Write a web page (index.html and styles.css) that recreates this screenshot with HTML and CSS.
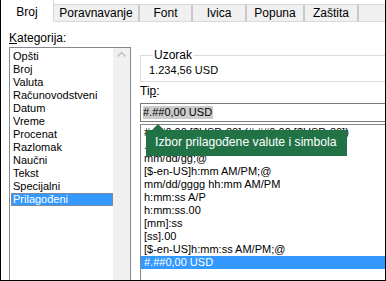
FILE: index.html
```html
<!DOCTYPE html>
<html lang="sr">
<head>
    <meta charset="UTF-8">
    <title>Oblikovanje ćelija</title>
    <link rel="stylesheet" href="styles.css">
</head>
<body>
    <div class="dialog">
        <div class="tabs">
            <div class="tab active">Broj</div>
            <div class="tab tab-wide">Poravnavanje</div>
            <div class="tab">Font</div>
            <div class="tab">Ivica</div>
            <div class="tab tab-mid">Popuna</div>
            <div class="tab">Zaštita</div>
            <div class="tab-fill"></div>
        </div>
        <div class="page">
            <div class="left">
                <div class="label"><u>K</u>ategorija:</div>
                <div class="listbox">
                    <div class="items">
                        <div class="item">Opšti</div>
                        <div class="item">Broj</div>
                        <div class="item">Valuta</div>
                        <div class="item">Računovodstveni</div>
                        <div class="item">Datum</div>
                        <div class="item">Vreme</div>
                        <div class="item">Procenat</div>
                        <div class="item">Razlomak</div>
                        <div class="item">Naučni</div>
                        <div class="item">Tekst</div>
                        <div class="item">Specijalni</div>
                        <div class="item selected">Prilagođeni</div>
                    </div>
                    <div class="scrollbar">
                        <svg width="17" height="14" viewBox="0 0 17 14">
                            <path d="M4.5 8.5 L8.5 4.5 L12.5 8.5" fill="none" stroke="#c2c2c2" stroke-width="1.5"/>
                        </svg>
                    </div>
                </div>
            </div>
            <div class="right">
                <fieldset class="sample">
                    <legend>Uzorak</legend>
                    <div class="sample-value">1.234,56 USD</div>
                </fieldset>
                <div class="label type-label">Ti<u>p</u>:</div>
                <div class="type-input"><span class="sel">#.##0,00 USD</span></div>
                <div class="type-list">
                    <div class="row">#.##0,00 [$USD-80];(#.##0,00 [$USD-80])</div>
                    <div class="row">.mm/dd/gggg h:mm</div>
                    <div class="row">mm/dd/gg;@</div>
                    <div class="row">[$-en-US]h:mm AM/PM;@</div>
                    <div class="row">mm/dd/gggg hh:mm AM/PM</div>
                    <div class="row">h:mm:ss A/P</div>
                    <div class="row">h:mm:ss.00</div>
                    <div class="row">[mm]:ss</div>
                    <div class="row">[ss].00</div>
                    <div class="row">[$-en-US]h:mm:ss AM/PM;@</div>
                    <div class="row selected">#.##0,00 USD</div>
                    <div class="tooltip">Izbor prilagođene valute i simbola</div>
                </div>
            </div>
        </div>
    </div>
</body>
</html>
```

FILE: styles.css
```css
body {
    margin: 0;
    background-color: #fff;
    font-family: "Liberation Sans", Arial, sans-serif;
    font-size: 11px;
    color: #000;
}
.dialog {
    width: 386px;
    height: 281px;
    box-sizing: border-box;
    border-left: 1px solid #000;
    border-right: 1px solid #000;
    border-bottom: 1px solid #000;
    overflow: hidden;
    background-color: #fff;
}
.tabs {
    display: flex;
    align-items: flex-end;
    height: 22px;
}
.tab {
    height: 18px;
    line-height: 17px;
    box-sizing: border-box;
    width: 54px;
    text-align: center;
    background-color: #f0f0f0;
    border-top: 1px solid #d9d9d9;
    border-right: 2px solid #c9c9c9;
    border-bottom: 1px solid #d9d9d9;
    font-size: 12px;
}
.tab:nth-child(3) {
    width: 53px;
}
.tab.active {
    width: 53px;
    height: 22px;
    line-height: 24px;
    background-color: #fff;
    border: none;
    border-right: 1px solid #d9d9d9;
}
.tab-wide {
    width: 86px;
}
.tab.tab-mid {
    width: 58px;
}
.tab-fill {
    flex: 1;
    height: 18px;
    box-sizing: border-box;
    background-color: #f0f0f0;
    border-top: 1px solid #d9d9d9;
    border-bottom: 1px solid #d9d9d9;
}
.page {
    display: flex;
    gap: 9px;
    padding: 10px 0 0 8px;
}
.left {
    width: 122px;
    flex: none;
}
.label {
    line-height: 13px;
    height: 13px;
    font-size: 12px;
}
.type-label {
    margin-top: 2px;
}
.listbox {
    display: flex;
    margin-top: 2px;
    height: 240px;
    border: 1px solid #828790;
}
.items {
    flex: 1;
    padding-top: 2px;
}
.item {
    line-height: 13px;
    height: 13px;
    margin-left: 1px;
    padding-left: 2px;
    white-space: nowrap;
}
.item.selected {
    background-color: #3399ff;
    color: #fff;
    outline: 1px dotted #c8783c;
    outline-offset: -1px;
}
.scrollbar {
    width: 17px;
    background-color: #f0f0f0;
}
.scrollbar svg {
    display: block;
}
.right {
    flex: 1;
    padding-top: 17px;
}
.sample {
    margin: 0 0 3px 0;
    padding: 2px 0 4px 8px;
    border: 1px solid #dcdcdc;
    border-right: none;
}
.sample legend {
    padding: 0 1px;
    margin-left: 4px;
    line-height: 13px;
    font-size: 12px;
}
.sample-value {
    line-height: 13px;
}
.type-input {
    margin-top: 5px;
    height: 19px;
    box-sizing: border-box;
    border: 1px solid #7a7a7a;
    border-right: none;
    padding: 2px 0 0 2px;
    line-height: 13px;
}
.sel {
    background-color: #cccccc;
    display: inline-block;
    height: 13px;
    padding-right: 1px;
}
.type-list {
    position: relative;
    margin-top: 2px;
    height: 160px;
    border: 1px solid #828790;
    border-right: none;
    padding-top: 1px;
}
.row {
    line-height: 13px;
    height: 13px;
    padding-left: 3px;
    white-space: nowrap;
}
.row.selected {
    background-color: #3399ff;
    color: #fff;
}
.tooltip {
    position: absolute;
    left: 5px;
    top: 5px;
    width: 201px;
    height: 26px;
    box-sizing: border-box;
    padding-left: 9px;
    line-height: 25px;
    background-color: #217346;
    color: #fff;
    font-size: 12.2px;
    white-space: nowrap;
}
.tooltip::before {
    content: "";
    position: absolute;
    left: 6px;
    top: -6px;
    border-left: 6px solid transparent;
    border-right: 6px solid transparent;
    border-bottom: 6px solid #217346;
}
```
